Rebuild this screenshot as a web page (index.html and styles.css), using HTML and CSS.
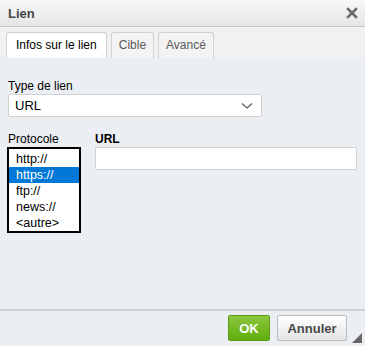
FILE: index.html
```html
<!DOCTYPE html>
<html lang="fr">
<head>
    <meta charset="UTF-8">
    <title>Lien</title>
    <link rel="stylesheet" href="styles.css">
</head>
<body>
    <div class="dialog">
        <!-- Title -->
        <div class="dialog-title">
            <span>Lien</span>
            <span class="close">
                <svg width="12" height="12" viewBox="0 0 12 12">
                    <path d="M2 2 L10 10 M10 2 L2 10" stroke="#6b6b6b" stroke-width="2.6" stroke-linecap="square"/>
                </svg>
            </span>
        </div>
        <!-- Tabs -->
        <div class="tabs">
            <div class="tab active">Infos sur le lien</div>
            <div class="tab">Cible</div>
            <div class="tab">Avancé</div>
        </div>
        <!-- Contents -->
        <div class="contents">
            <div class="field">
                <label>Type de lien</label>
                <div class="select">
                    <span>URL</span>
                    <svg width="12" height="8" viewBox="0 0 12 8">
                        <path d="M1 1.5 L6 6 L11 1.5" fill="none" stroke="#555" stroke-width="1.1"/>
                    </svg>
                </div>
            </div>
            <div class="row">
                <div class="field">
                    <label>Protocole</label>
                    <div class="listbox">
                        <div class="option">http://</div>
                        <div class="option selected">https://</div>
                        <div class="option">ftp://</div>
                        <div class="option">news://</div>
                        <div class="option">&lt;autre&gt;</div>
                    </div>
                </div>
                <div class="field grow">
                    <label class="bold">URL</label>
                    <div class="input"></div>
                </div>
            </div>
        </div>
        <!-- Footer -->
        <div class="footer">
            <button class="btn ok">OK</button>
            <button class="btn cancel">Annuler</button>
            <span class="resize"></span>
        </div>
    </div>
</body>
</html>
```

FILE: styles.css
```css
body {
    margin: 0;
    font-family: 'Liberation Sans', Arial, sans-serif;
    font-size: 12px;
    color: #000;
}
.dialog {
    width: 365px;
    height: 346px;
    display: flex;
    flex-direction: column;
    background: #ebeff4;
    overflow: hidden;
}
/* Title */
.dialog-title {
    height: 26px;
    flex-shrink: 0;
    border-bottom: 1px solid #c6c6c6;
    background: linear-gradient(#f7f7f7, #e6e6e6);
    display: flex;
    align-items: center;
    justify-content: space-between;
    padding: 0 7px 0 8px;
    font-size: 13px;
    font-weight: bold;
    color: #484848;
}
.close {
    display: flex;
}
/* Tabs */
.tabs {
    height: 31px;
    flex-shrink: 0;
    background: #f1f1f1;
    display: flex;
    align-items: flex-end;
    gap: 4px;
    padding-left: 6px;
}
.tab {
    height: 25px;
    line-height: 25px;
    padding: 0 7px;
    border: 1px solid #d1d1d1;
    border-bottom: none;
    border-radius: 3px 3px 0 0;
    background: #f3f3f3;
    color: #595959;
    font-size: 12px;
}
.tab.active {
    background: #fff;
    color: #000;
    padding: 0 9px;
}
/* Contents */
.contents {
    flex: 1;
    padding: 21px 8px 0 7px;
}
.field {
    display: flex;
    flex-direction: column;
}
.field label {
    line-height: 14px;
    margin-bottom: 1px;
    padding-left: 1px;
}
.field label.bold {
    font-weight: bold;
    padding-left: 0;
}
.select {
    margin-left: 1px;
    width: 254px;
    height: 23px;
    background: #fff;
    border: 1px solid #d1d1d1;
    border-radius: 2px;
    display: flex;
    align-items: center;
    justify-content: space-between;
    padding: 0 8px 0 6px;
    box-sizing: border-box;
    font-size: 13px;
}
.row {
    display: flex;
    gap: 14px;
    margin-top: 15px;
}
.grow {
    flex: 1;
}
.listbox {
    width: 74px;
    height: 86px;
    border: 2px solid #000;
    box-sizing: border-box;
    background: #fff;
    padding-top: 2px;
}
.option {
    height: 16px;
    line-height: 16px;
    padding-left: 7px;
    font-size: 12.5px;
}
.option.selected {
    background: #0078d7;
    color: #fff;
}
.input {
    height: 23px;
    background: #fff;
    border: 1px solid #d1d1d1;
    border-radius: 2px;
    box-sizing: border-box;
}
/* Footer */
.footer {
    height: 37px;
    flex-shrink: 0;
    box-sizing: border-box;
    border-top: 2px solid #cfd3d7;
    display: flex;
    justify-content: flex-end;
    align-items: flex-start;
    gap: 7px;
    padding: 4px 18px 0 0;
    position: relative;
}
.btn {
    height: 26px;
    padding: 0;
    font-family: inherit;
    font-size: 13px;
    font-weight: bold;
    color: #484848;
    border: 1px solid #bcbcbc;
    border-radius: 2px;
    background: linear-gradient(#fff, #e4e4e4);
}
.btn.ok {
    width: 42px;
    color: #fff;
    border-color: #5c9c1a;
    background: linear-gradient(#8cc63f, #5fae0b);
}
.btn.cancel {
    width: 70px;
}
.resize {
    position: absolute;
    right: 3px;
    bottom: 3px;
    width: 0;
    height: 0;
    border-left: 10px solid transparent;
    border-bottom: 10px solid #666;
}
```
